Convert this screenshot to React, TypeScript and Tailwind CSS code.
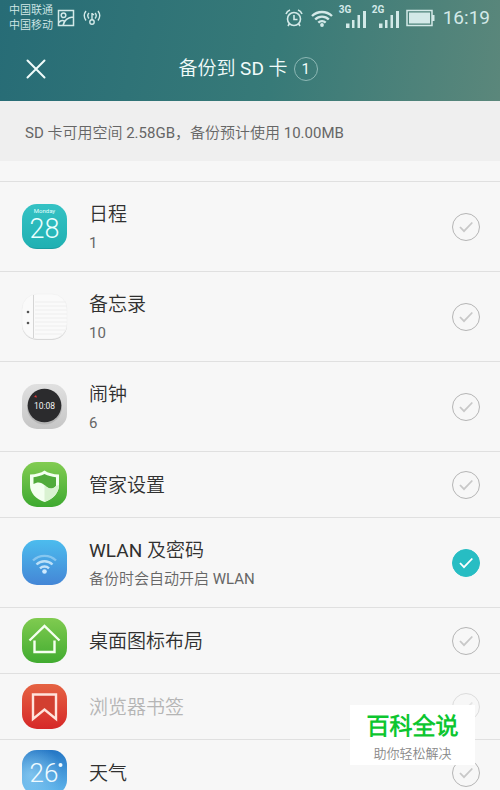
import { useState, type ReactNode } from "react";
import clsx from "clsx";

function Tile({ id, from, to, children }: { id: string; from: string; to: string; children: ReactNode }) {
  return (
    <svg viewBox="0 0 45 45" className="size-[45px] shrink-0" aria-hidden="true">
      <defs>
        <linearGradient id={id} x1="0" y1="0" x2="0" y2="1">
          <stop offset="0" stopColor={from} />
          <stop offset="1" stopColor={to} />
        </linearGradient>
      </defs>
      <rect width="45" height="45" rx="15" fill={`url(#${id})`} />
      {children}
    </svg>
  );
}

function CalendarIcon() {
  return (
    <Tile id="calendar" from="#35c2c4" to="#1fb0b2">
      <path d="M7 42.500Q10 44.500 15 44.500H30Q35 44.500 38 42.500" fill="none" stroke="#188f92" opacity=".6" />
      <text x="22.500" y="9" fontSize="6" textAnchor="middle" fill="#e4ffff" className="font-[Roboto]">Monday</text>
      <text x="22.500" y="34" fontSize="27" textAnchor="middle" fill="#e9ffff" className="font-[Roboto] font-light">28</text>
    </Tile>
  );
}

function MemoIcon() {
  return (
    <svg viewBox="0 0 45 45" className="size-[45px] shrink-0 overflow-visible" aria-hidden="true">
      <rect y="1" width="45" height="45" rx="15" fill="#d2d2d2" />
      <rect width="45" height="45" rx="15" fill="#fafafa" stroke="#ececec" strokeWidth=".5" />
      <path d="M13 8H44M13 12H45M13 16H45M13 20H45M13 24H45M13 28H45M13 32H45M13 36H43M13 40H40" stroke="#eeeeee" />
      <path d="M11.500 1V44" stroke="#d5d5d5" />
      <circle cx="6" cy="18" r="1.300" fill="#555" />
      <circle cx="6" cy="29" r="1.300" fill="#555" />
    </svg>
  );
}

function ClockIcon() {
  return (
    <Tile id="clock" from="#e0e0e0" to="#c6c6c6">
      <circle cx="22.500" cy="23" r="17.500" fill="#b4b4b4" />
      <circle cx="22.500" cy="21.500" r="16.800" fill="#2b2b2d" />
      <path d="m12 13 2-2 1 2.500Z" fill="#e03a3a" />
      <text x="22.500" y="24.500" fontSize="8.500" textAnchor="middle" fill="#f2f2f2" className="font-[Roboto]">10:08</text>
    </Tile>
  );
}

function ShieldIcon() {
  return (
    <Tile id="shield" from="#82cc52" to="#3ea930">
      <path d="M22.500 8.500C26 11 31 12.300 37 12.500V23C37 31 31 37 22.500 40C14 37 8 31 8 23V12.500C14 12.300 19 11 22.500 8.500Z" fill="#f3fff0" />
      <path d="M22.500 12C26 13.800 29.500 14.800 34 15.200V24C30 28 26.500 27 23 23.500C19 19.500 15 20 11.500 22V15.200C15.500 14.800 19 13.800 22.500 12Z" fill="#51ab3b" />
      <path d="M22.500 23C26.500 27 30 28 34 24L37 23C37 31 31 37 22.500 40Z" fill="#d9f2d1" />
    </Tile>
  );
}

function WlanIcon() {
  return (
    <Tile id="wlan" from="#4cbcee" to="#4486d6">
      <g fill="none" stroke="#e3f5ff" strokeWidth="2.400">
        <path d="M11 20.500a16.500 16.500 0 0 1 23 0" opacity=".4" />
        <path d="M14.500 24.500a11.500 11.500 0 0 1 16 0" opacity=".75" />
        <path d="M18 28.300a6.500 6.500 0 0 1 9 0" opacity=".8" />
      </g>
      <circle cx="22.500" cy="31.500" r="2.300" fill="#cfeaff" />
    </Tile>
  );
}

function HomeIcon() {
  return (
    <Tile id="home" from="#80cb50" to="#41ab30">
      <g fill="none" stroke="#f5fff0" strokeWidth="2.400">
        <path d="M7.500 22.500 22.500 8 37.500 22.500" />
        <path d="M12.500 22.500V34H32.500V22.500" />
      </g>
    </Tile>
  );
}

function BookmarkIcon() {
  return (
    <Tile id="bookmark" from="#e56343" to="#d62828">
      <path d="M11 10.500H34V35L22.500 25.500 11 35Z" fill="#d23f30" stroke="#ffe3dc" strokeWidth="2.400" />
    </Tile>
  );
}

function WeatherIcon() {
  return (
    <Tile id="weather" from="#2476c4" to="#62b8ee">
      <defs>
        <radialGradient id="haze" cx=".2" cy=".55" r=".7">
          <stop offset="0" stopColor="#9bd8f8" stopOpacity=".65" />
          <stop offset="1" stopColor="#9bd8f8" stopOpacity="0" />
        </radialGradient>
      </defs>
      <rect width="45" height="45" rx="15" fill="url(#haze)" />
      <text x="22" y="32" fontSize="26" textAnchor="middle" fill="#eefaff" className="font-[Roboto] font-light">26</text>
      <circle cx="38.500" cy="15" r="2" fill="#eefaff" />
    </Tile>
  );
}

const ITEMS = [
  { id: "schedule", title: "日程", note: "1", Icon: CalendarIcon },
  { id: "memo", title: "备忘录", note: "10", Icon: MemoIcon },
  { id: "alarm", title: "闹钟", note: "6", Icon: ClockIcon },
  { id: "manager", title: "管家设置", Icon: ShieldIcon },
  { id: "wlan", title: "WLAN 及密码", note: "备份时会自动开启 WLAN", Icon: WlanIcon },
  { id: "desktop", title: "桌面图标布局", Icon: HomeIcon },
  { id: "bookmarks", title: "浏览器书签", disabled: true, Icon: BookmarkIcon },
  { id: "weather", title: "天气", Icon: WeatherIcon },
];

function Signal({ label }: { label: string }) {
  return (
    <div className="relative h-6 w-7">
      <span className="absolute left-0 -top-1 text-[10px] font-bold leading-3">{label}</span>
      <svg viewBox="0 0 28 24" className="h-6 w-7" fill="currentColor" aria-hidden="true">
        <path d="M7 15.500h3.500v4.500H7zM13 12h2.500v8H13zM18.500 7H21v13h-2.500zM24 3h3v17h-3z" />
      </svg>
    </div>
  );
}

function StatusBar() {
  return (
    <div className="flex h-9 items-center justify-between pl-[9px] pr-2.5 text-[#d3e9e8]">
      <div className="flex items-center gap-1">
        <div className="text-[11px] leading-[15px]">
          <p>中国联通</p>
          <p>中国移动</p>
        </div>
        <svg viewBox="0 0 18 18" className="size-[18px]" fill="none" stroke="currentColor" strokeWidth="1.500" aria-hidden="true">
          <path d="M1.500 1.500h15v15h-15zM2 13.500Q4 10.500 7.500 12M6 16.500Q8 8.500 16 8" />
          <circle cx="6.500" cy="6.300" r="2.300" />
        </svg>
        <svg viewBox="0 0 18 18" className="ml-1 size-[18px]" fill="none" stroke="currentColor" strokeWidth="1.400" aria-hidden="true">
          <path d="M3 2Q-.5 6.500 3 11.500M6 4Q3.500 6.500 6 9.500M15 2Q18.500 6.500 15 11.500M12 4Q14.500 6.500 12 9.500M9 4v7M9 4.500l2 1.500" />
          <circle cx="9" cy="13" r="2.200" />
        </svg>
      </div>
      <div className="flex items-center gap-1.5">
        <svg viewBox="0 0 18 18" className="mr-0.5 size-[18px]" fill="none" stroke="currentColor" strokeWidth="1.600" aria-hidden="true">
          <circle cx="9" cy="10" r="6.500" />
          <path d="M9 6v4.500h3.500M1 5Q2 2 5 1M17 5Q16 2 13 1M4.500 14.500 3 17M13.500 14.500 15 17" />
        </svg>
        <svg viewBox="0 0 22 17" className="h-[17px] w-[22px]" fill="none" stroke="currentColor" strokeWidth="2.400" aria-hidden="true">
          <path d="M1 6a14.500 14.500 0 0 1 20 0M4.200 9.500a9.500 9.500 0 0 1 13.600 0M7.300 12.600a5.500 5.500 0 0 1 7.400 0" />
          <circle cx="11" cy="15" r="1.900" fill="currentColor" stroke="none" />
        </svg>
        <div className="flex gap-[5px] pt-1">
          <Signal label="3G" />
          <Signal label="2G" />
        </div>
        <svg viewBox="0 0 29 18" className="h-[18px] w-[29px]" fill="currentColor" aria-hidden="true">
          <path d="M1 1.500h25v15H1z" fill="none" stroke="currentColor" strokeWidth="1.500" />
          <path d="M3 3.500h21v11H3zM26 6h2.500v6H26z" />
        </svg>
        <span className="ml-0.5 text-[19px] leading-6">16:19</span>
      </div>
    </div>
  );
}

export default function App() {
  const [selected, setSelected] = useState<string[]>(["wlan"]);

  const toggle = (id: string) =>
    setSelected((prev) => (prev.includes(id) ? prev.filter((x) => x !== id) : [...prev, id]));

  return (
    <div className="relative flex h-screen flex-col overflow-hidden bg-[#f7f7f7] font-[Roboto,'Noto_Sans_CJK_SC_DemiLight','Noto_Sans_CJK_SC_Light','Noto_Sans_CJK_SC',sans-serif] text-[#303030]">
      <header className="shrink-0 bg-linear-[100deg,#276c76,#377a78_55%,#5b877b]">
        <StatusBar />
        <div className="grid h-[65px] grid-cols-[72px_1fr_76px] items-center text-[#f0fbfa]">
          <button type="button" aria-label="关闭" className="flex justify-center">
            <svg viewBox="0 0 20 20" className="size-5" fill="none" stroke="currentColor" strokeWidth="2" strokeLinecap="round">
              <path d="M1.500 1.500 18.500 18.500M18.500 1.500 1.500 18.500" />
            </svg>
          </button>
          <h1 className="flex items-center justify-center gap-1.5 text-[19px] leading-7">
            备份到 SD 卡
            <span className="flex size-6 items-center justify-center rounded-full border border-[#8db8b5] text-[15px]">
              {selected.length}
            </span>
          </h1>
        </div>
      </header>

      <p className="shrink-0 bg-[#efefef] px-[25px] pt-5 pb-4 text-[15px] leading-6 text-[#666]">
        SD 卡可用空间 2.58GB，备份预计使用 10.00MB
      </p>

      <ul className="mt-5">
        {ITEMS.map(({ id, title, note, disabled, Icon }) => (
          <li key={id} className="border-t border-[#e0e0e0]">
            <label className={clsx("flex items-center gap-[22px] pl-[22px] pr-5", note ? "h-[89px]" : "h-[65px]")}>
              <Icon />
              <span className={clsx("min-w-0 flex-1", note ? "pt-1" : "pt-0.5")}>
                <span className={clsx("block text-[19px] leading-7", disabled && "text-[#b5b5b5]")}>{title}</span>
                {note && <span className="block text-[15px] leading-7 text-[#666]">{note}</span>}
              </span>
              <span className={clsx("grid size-7 place-items-center", disabled && "opacity-40")}>
                <input
                  type="checkbox"
                  checked={selected.includes(id)}
                  disabled={disabled}
                  onChange={() => toggle(id)}
                  className="peer col-start-1 row-start-1 size-7 appearance-none rounded-full border border-[#b5b5b5] checked:border-[#27bdc3] checked:bg-[#27bdc3]"
                />
                <svg
                  viewBox="0 0 14 12"
                  className="pointer-events-none col-start-1 row-start-1 h-3 w-3.5 text-[#c8c8c8] peer-checked:text-white"
                  fill="none"
                  stroke="currentColor"
                  strokeWidth="1.800"
                  aria-hidden="true"
                >
                  <path d="M1 6 5 10.200 13.300 1.500" />
                </svg>
              </span>
            </label>
          </li>
        ))}
      </ul>

      <div className="absolute right-[25px] bottom-[25px] flex h-[60px] w-[125px] flex-col items-center justify-center bg-white pt-1">
        <strong className="text-[23px] font-bold leading-[34px] text-[#0cc62f]">百科全说</strong>
        <span className="text-[13px] leading-5 text-[#888]">助你轻松解决</span>
      </div>
    </div>
  );
}
